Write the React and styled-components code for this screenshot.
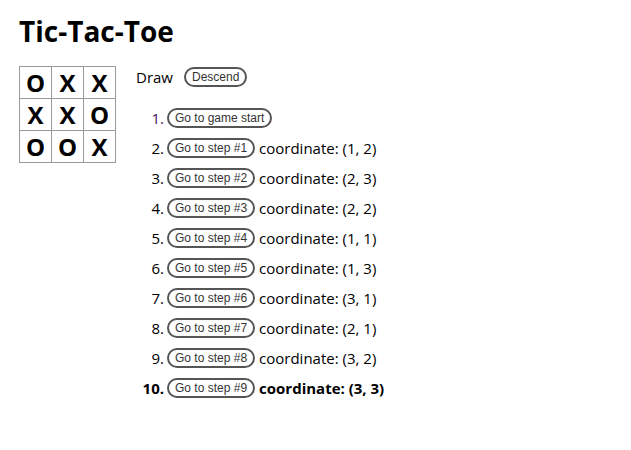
import React from "react";
import styled, { createGlobalStyle } from "styled-components";

const Global = createGlobalStyle`
  html, body { margin: 0; padding: 0; background: #fff; }
  body { font-family: "Open Sans", "DejaVu Sans", sans-serif; color: #000; }
`;

const Page = styled.div`
  padding: 12px 19px 0 19px;
`;

const Title = styled.h1`
  margin: 0 0 16px 0;
  font-family: "Open Sans", sans-serif;
  font-weight: 700;
  font-size: 28px;
  line-height: 38px;
`;

const Game = styled.div`
  display: flex;
  align-items: flex-start;
`;

const Board = styled.div`
  display: grid;
  grid-template-columns: repeat(3, 32px);
  grid-auto-rows: 32px;
  border-left: 1px solid #999;
  border-top: 1px solid #999;
`;

const Square = styled.div`
  border-right: 1px solid #999;
  border-bottom: 1px solid #999;
  display: flex;
  align-items: center;
  justify-content: center;
  font-family: "Open Sans", sans-serif;
  font-weight: 700;
  font-size: 24px;
  line-height: 1;
  background: #fff;
`;

const Info = styled.div`
  margin-left: 20px;
  padding-top: 1px;
  font-size: 15px;
`;

const Status = styled.div`
  display: flex;
  align-items: center;
  height: 20px;
  gap: 11px;
`;

const Pill = styled.button`
  font-family: "Liberation Sans", Arial, sans-serif;
  font-size: 12px;
  line-height: 16px;
  height: 20px;
  color: #333;
  background: #fff;
  border: 2px solid #555;
  border-radius: 10px;
  padding: 0 6px;
  margin: 0;
  cursor: pointer;
`;

const Moves = styled.ol`
  list-style: none;
  margin: 16px 0 0 0;
  padding: 0;
`;

const Move = styled.li`
  display: flex;
  align-items: center;
  height: 30px;
  font-weight: ${(p) => (p.$current ? 700 : 400)};
`;

const Num = styled.span`
  width: 28px;
  text-align: right;
  margin-right: 3px;
  color: ${(p) => (p.$first ? "#4a1060" : "inherit")};
`;

const Coord = styled.span`
  margin-left: 4px;
`;

const board = ["O", "X", "X", "X", "X", "O", "O", "O", "X"];
const coords = ["(1, 2)", "(2, 3)", "(2, 2)", "(1, 1)", "(1, 3)", "(3, 1)", "(2, 1)", "(3, 2)", "(3, 3)"];

export default function App() {
  return (
    <>
      <Global />
      <Page>
        <Title>Tic-Tac-Toe</Title>
        <Game>
          <Board>
            {board.map((v, i) => (
              <Square key={i}>{v}</Square>
            ))}
          </Board>
          <Info>
            <Status>
              <span>Draw</span>
              <Pill>Descend</Pill>
            </Status>
            <Moves>
              <Move>
                <Num $first>1.</Num>
                <Pill>Go to game start</Pill>
              </Move>
              {coords.map((c, i) => (
                <Move key={i} $current={i === coords.length - 1}>
                  <Num>{i + 2}.</Num>
                  <Pill>Go to step #{i + 1}</Pill>
                  <Coord>coordinate: {c}</Coord>
                </Move>
              ))}
            </Moves>
          </Info>
        </Game>
      </Page>
    </>
  );
}
